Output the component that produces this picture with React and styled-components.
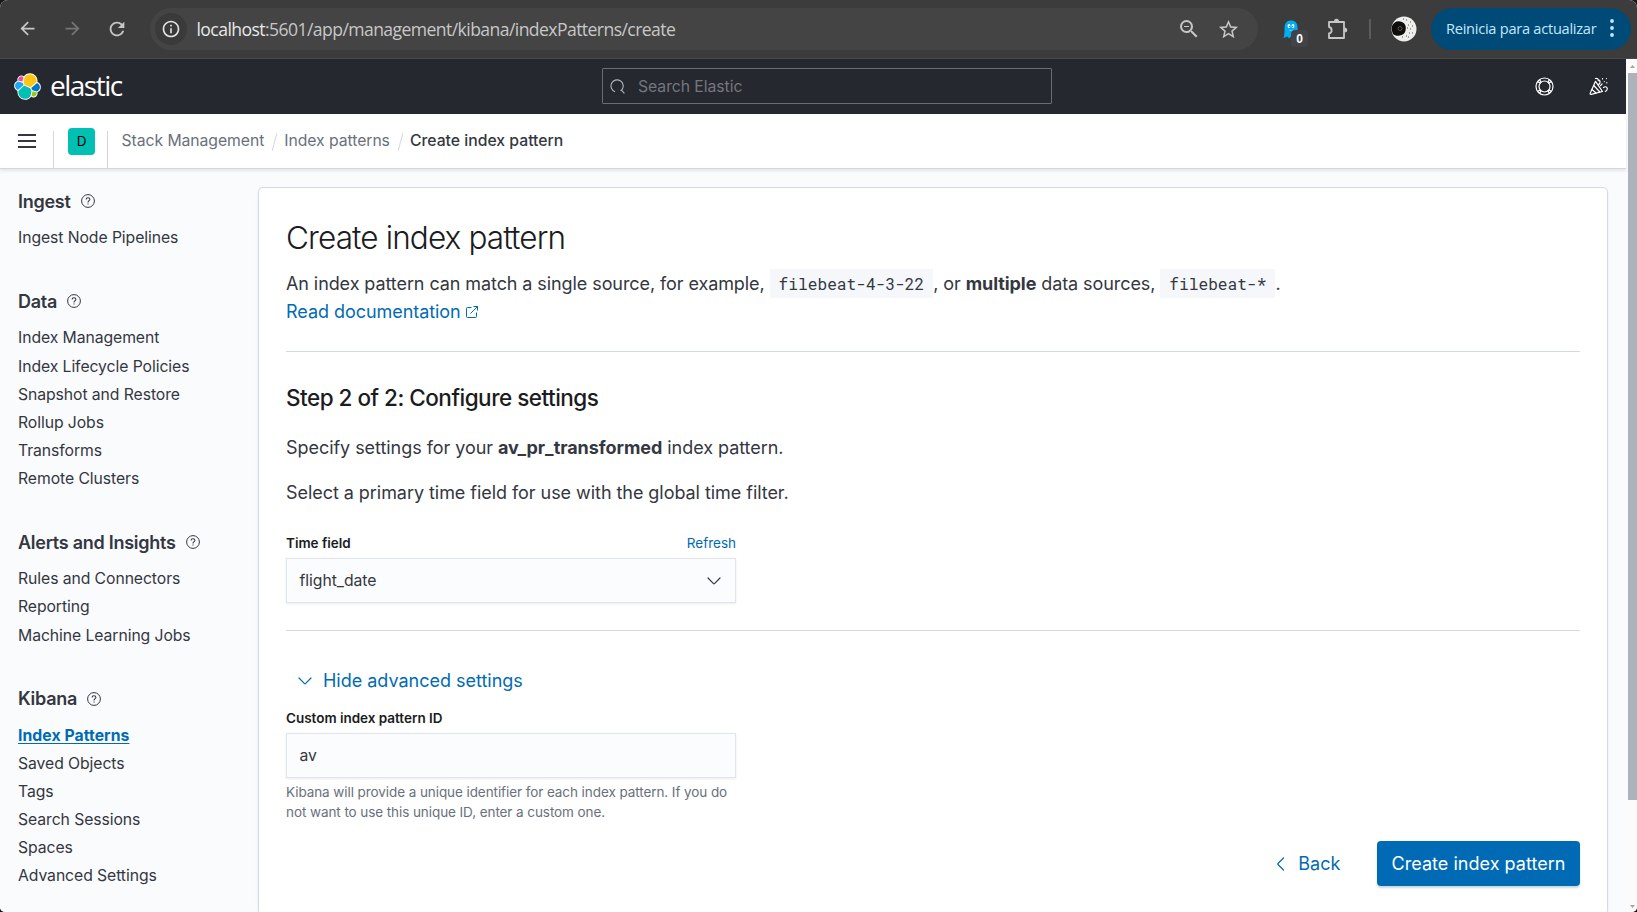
import React from "react";
import styled, { createGlobalStyle } from "styled-components";
import { MdArrowBack, MdArrowForward, MdRefresh, MdInfoOutline, MdStarBorder, MdZoomOut } from "react-icons/md";

const Global = createGlobalStyle`
  *, *::before, *::after { box-sizing: border-box; }
  html, body { margin: 0; padding: 0; background: #17181a; }
  body { font-family: Inter, "Liberation Sans", sans-serif; color: #343741; overflow: hidden; }
  h1, h2, h3, p, ul { margin: 0; padding: 0; font-weight: inherit; }
  ul { list-style: none; }
  svg { display: block; flex: none; }
`;

const Window = styled.div`
  width: 1637px; height: 912px; display: flex; flex-direction: column;
  overflow: hidden; border-radius: 8px 8px 5px 5px; background: #fafbfd;
`;

/* Browser toolbar */
const BrowserBar = styled.div`
  height: 59px; flex: none; display: flex; align-items: center;
  background: #3c3c3c; border-bottom: 1px solid #4a4a4a; padding: 0 6px 1px 15px;
  font-family: "Open Sans", "Noto Sans", sans-serif;
`;
const NavButton = styled.span`
  width: 24px; margin-right: ${p => p.$gap}px; display: flex; justify-content: center;
  color: ${p => (p.$dim ? "#757575" : "#c7c7c7")};
`;
const AddressBar = styled.div`
  width: 1108px; height: 42px; border-radius: 21px; background: #444444;
  display: flex; align-items: center; padding: 0 18px 0 5px; color: #c7c7c7;
`;
const SiteInfo = styled.span`
  width: 32px; height: 32px; border-radius: 50%; background: #3a3a3a; color: #e3e3e3;
  display: flex; align-items: center; justify-content: center; margin-right: 9px;
`;
const Url = styled.span`
  flex: 1; font-size: 17.6px; letter-spacing: -0.58px; line-height: 24px; color: #c7c7c7; white-space: nowrap;
  padding: 1px 0 0 0.5px;
  b { font-weight: 400; color: #e8e8e8; }
`;
const AddressActions = styled.span`display: flex; gap: 16px; align-items: center; padding-top: 1px;`;
const Extensions = styled.div`
  flex: 1; display: flex; align-items: center; padding-left: 24px; color: #c7c7c7;
`;
const Ghost = styled.span`position: relative; width: 26px; height: 28px; padding: 5px 0 0 1px; margin-right: 19px;`;
const GhostCount = styled.span`
  position: absolute; right: 0; bottom: -4px; width: 17px; height: 17px; border-radius: 4px;
  background: #414349; color: #fff; font: bold 12px/18px "Liberation Sans", sans-serif; text-align: center;
`;
const Divider = styled.span`width: 2px; height: 20px; background: #5c5c5c; margin: 0 20px 0 20px;`;
const UpdateButton = styled.span`
  width: 200px; height: 42px; border-radius: 21px; background: #004a77; color: #c2e7ff;
  display: flex; align-items: center; justify-content: space-between; padding: 0 17px 1px 15px;
  font-size: 14.6px; letter-spacing: -0.26px; white-space: nowrap;
`;

/* Page body beside the scrollbar */
const Viewport = styled.div`flex: 1; min-height: 0; display: flex;`;
const Page = styled.div`width: 1626px; display: flex; flex-direction: column; background: #fafbfd;`;
const Scrollbar = styled.div`
  flex: 1; display: flex; flex-direction: column; align-items: flex-end; justify-content: space-between;
  background: #fbfbfc; padding: 4px 0 2px 2px;
`;
const ScrollThumb = styled.div`width: 9px; height: 727px; background: #aeb3bb; margin-bottom: auto;`;
const ScrollArrow = styled.svg`width: 9px; height: 10px; fill: #a3a3a3;`;

const TopHeader = styled.header`
  height: 55px; flex: none; background: #25282f; display: flex; align-items: center;
  padding: 0 18px 1px 14px; color: #fff;
`;
const Brand = styled.div`
  width: 588px; display: flex; align-items: center; gap: 9px; padding-top: 1px;
  font: 400 28px/34px "Open Sans", sans-serif; letter-spacing: -1.5px;
`;
const Wordmark = styled.span`height: 37px;`;
const SearchBox = styled.div`
  width: 450px; height: 36px; border: 1px solid #696c72; border-radius: 1px; display: flex; align-items: center;
  padding: 1px 0 0 7px; gap: 13px; font-size: 15.75px; letter-spacing: -0.05px; color: #74777d;
`;
const HeaderIcons = styled.div`margin-left: auto; display: flex; gap: 35px; align-items: center;`;

const CrumbBar = styled.nav`
  height: 55px; flex: none; display: flex; background: #fff; border-bottom: 1px solid #d3d6de;
  box-shadow: 0 2px 3px rgba(65, 70, 90, 0.12); position: relative;
`;
const MenuCell = styled.div`
  width: 54px; padding: 20px 0 0 18px; 
`;
const Bar = styled.div`width: 18px; height: 2px; background: #343741; margin-bottom: 4px;`;
const Rule = styled.span`width: 1px; height: 37px; margin: 17px 0 0 -1px; background: #d3d6de;`;
const SpaceCell = styled.div`width: 54px; padding: 14px 0 0 14px;`;
const SpaceAvatar = styled.div`
  width: 27px; height: 27px; border-radius: 4px; background: #00bfb3; color: #000;
  font-size: 13.5px; line-height: 26px; text-align: center;
`;
const Crumbs = styled.div`
  height: 53px; display: flex; align-items: center; padding-left: 13.5px; font-size: 15.75px; letter-spacing: -0.06px;
`;
const Crumb = styled.span`color: ${p => (p.$current ? "#343741" : "#69707d")}; font-weight: ${p => (p.$current ? 500 : 400)}; letter-spacing: ${p => (p.$current ? "0" : "inherit")};`;
const Slash = styled.span`
  width: 1px; height: 18px; background: #d3d6de; transform: rotate(15deg); margin: 2px 9px 0 10px;
`;

const Content = styled.div`flex: 1; min-height: 0; display: flex;`;
const Sidebar = styled.aside`width: 258px; flex: none; padding: 18px 0 0 18px;`;
const SideSection = styled.section`margin-bottom: 35.2px;`;
const SideTitle = styled.h3`
  height: 28px; display: flex; align-items: center; gap: 10px; margin-bottom: 9.1px;
  font-size: 18px; font-weight: 600; letter-spacing: -0.27px;
`;
const SideLink = styled.li`
  height: 28.1px; line-height: 28.1px; font-size: 15.75px;
  color: ${p => (p.$active ? "#006bb4" : "#343741")};
  font-weight: ${p => (p.$active ? 700 : 400)};
  letter-spacing: ${p => (p.$active ? "0.06px" : "-0.08px")};
  text-decoration: ${p => (p.$active ? "underline" : "none")};
  text-underline-offset: 2px;
`;

const Panel = styled.main`
  width: 1350px; height: 728px; flex: none; margin-top: 18px; background: #fff; border: 1px solid #d3dae6;
  border-radius: 5px; box-shadow: 0 2px 3px rgba(100, 110, 140, 0.1); padding: 31px 27px 0;
  font-size: 18px; line-height: 28px; letter-spacing: -0.05px;
`;
const PageTitle = styled.h1`
  font-size: 31.5px; line-height: 38px; font-weight: 300; letter-spacing: -0.88px; color: #1a1c21; margin-bottom: 13px;
`;
const Code = styled.code`
  font-family: "Roboto Mono", "Liberation Mono", monospace; font-size: 16.2px; letter-spacing: 0;
  background: #f5f7fa; padding: 4px 9px; line-height: 20px;
`;
const Link = styled.a`color: #006bb4; display: flex; align-items: center; gap: 5px;`;
const Separator = styled.hr`height: 1px; border: 0; background: #d3dae6; margin: ${p => p.$m};`;
const StepTitle = styled.h2`
  font-size: 22.5px; line-height: 27px; font-weight: 500; letter-spacing: -0.5px; color: #1a1c21; margin-bottom: 23px;
`;
const Intro = styled.p`letter-spacing: -0.085px;`;
const Paragraph = styled.p`margin-bottom: ${p => p.$gap || 0}px;`;
const Field = styled.div`width: 450px;`;
const FieldHead = styled.div`
  display: flex; justify-content: space-between; height: 20px; line-height: 20px; margin-bottom: 5px; font-size: 13.5px;
`;
const Label = styled.span`font-weight: 600; color: #1a1c21; letter-spacing: -0.02px;`;
const SmallLink = styled.a`color: #006bb4; letter-spacing: 0;`;
const Control = styled.div`
  height: 45px; border: 1px solid #e0e4ec; background: #fbfcfd; box-shadow: 0 1px 2px rgba(100, 110, 140, 0.12);
  display: flex; align-items: center; justify-content: space-between; padding: 1px 14px 0 12.5px; font-size: 15.75px;
`;
const Toggle = styled.div`
  display: flex; align-items: center; gap: 11px; padding-left: 12px; color: #006bb4; height: 28px; margin-bottom: 13px;
  letter-spacing: -0.01px;
`;
const HelpText = styled.p`font-size: 13.5px; line-height: 20.25px; letter-spacing: -0.08px; color: #69707d; padding-top: 4px;`;
const Actions = styled.div`display: flex; justify-content: flex-end; align-items: center; margin-top: 18.5px;`;
const BackButton = styled.span`display: flex; align-items: center; gap: 13.5px; color: #006bb4; margin-right: 36.5px; padding-top: 1px; letter-spacing: 0.05px;`;
const PrimaryButton = styled.span`
  width: 203px; height: 45px; border-radius: 4px; background: #006bb4; color: #fff; text-align: center;
  line-height: 46px; box-shadow: 0 2px 2px rgba(54, 97, 126, 0.25); letter-spacing: 0.03px;
`;

const HelpIcon = () => (
  <svg width="14" height="14" viewBox="0 0 14 14" fill="none" stroke="#343741" strokeWidth="1">
    <circle cx="7" cy="7" r="6.4" />
    <path d="M5.1 5.6c0-1.2.8-1.9 1.9-1.9s1.9.7 1.9 1.7C8.900 6.700 7 6.700 7 8.400M7 9.400v1.200" strokeWidth="1.1" />
  </svg>
);
const Chevron = ({ color }) => (
  <svg width="14" height="8" viewBox="0 0 14 8" fill="none" stroke={color} strokeWidth="1.2" strokeLinecap="round" strokeLinejoin="round">
    <path d="M1 1l5.500 5.600q.5.500 1 0L13 1" />
  </svg>
);
const ElasticLogo = () => {
  const parts = [
    ["#fec514", "M12.58 13.787l7.002 3.211 7.066-6.213a7.849 7.849 0 00.152-1.557c0-4.287-3.464-7.787-7.8-7.787-2.573 0-4.983 1.287-6.433 3.424l-1.177 6.116 1.19 2.806z"],
    ["#00bfb3", "M5.333 21.214A7.969 7.969 0 005.18 22.793c0 4.323 3.492 7.838 7.838 7.838 2.616 0 5.06-1.305 6.523-3.49l1.165-6.098-1.555-2.984-7.03-3.214-6.788 6.369z"],
    ["#f04e98", "M5.288 9.067l4.8 1.137L11.14 4.73A3.785 3.785 0 008.864 3.964c-2.092 0-3.799 1.714-3.799 3.82 0 .433.077.879.223 1.283z"],
    ["#1ba9f5", "M4.872 10.214c-2.136.713-3.633 2.772-3.633 5.037 0 2.206 1.36 4.174 3.401 4.953l6.734-6.103-1.237-2.649-5.265-1.238z"],
    ["#93c90e", "M20.873 27.108a3.745 3.745 0 002.259.768c2.08 0 3.78-1.713 3.78-3.801 0-.458-.077-.9-.223-1.29l-4.753-1.11-1.063 5.433z"],
    ["#0077cc", "M21.848 20.563l5.227 1.221c2.132-.705 3.623-2.765 3.623-5.037 0-2.202-1.362-4.169-3.398-4.945l-6.844 6.003 1.392 2.758z"],
  ];
  return (
    <svg width="27" height="27" viewBox="0 0 32 32">
      {parts.map(([c, d]) => <path key={c} d={d} fill="#fff" stroke="#fff" strokeWidth="2.2" strokeLinejoin="round" />)}
      {parts.map(([c, d]) => <path key={d} d={d} fill={c} />)}
    </svg>
  );
};

const sections = [
  ["Ingest", ["Ingest Node Pipelines"]],
  ["Data", ["Index Management", "Index Lifecycle Policies", "Snapshot and Restore", "Rollup Jobs", "Transforms", "Remote Clusters"]],
  ["Alerts and Insights", ["Rules and Connectors", "Reporting", "Machine Learning Jobs"]],
  ["Kibana", ["Index Patterns", "Saved Objects", "Tags", "Search Sessions", "Spaces", "Advanced Settings"]],
];

const Toolbar = () => (
  <BrowserBar>
    <NavButton $gap={21}><MdArrowBack size={21} /></NavButton>
    <NavButton $gap={21} $dim><MdArrowForward size={21} /></NavButton>
    <NavButton $gap={21}><MdRefresh size={22} /></NavButton>
    <AddressBar>
      <SiteInfo><MdInfoOutline size={20} /></SiteInfo>
      <Url><b>localhost</b>:5601/app/management/kibana/indexPatterns/create</Url>
      <AddressActions><MdZoomOut size={24} /><MdStarBorder size={23} /></AddressActions>
    </AddressBar>
    <Extensions>
      <Ghost>
        <svg width="15" height="19" viewBox="0 0 15 19">
          <path d="M1.500 8.500C1.500 3.500 3.500.5 8 .5c4 0 6.500 2.500 6.500 7V15H11l-.5 3-2.500-1.500L6 18.500l-1.500-2-4 1.500C1.500 15 1.500 12 1.500 8.500z" fill="#00aef0" />
          <ellipse cx="6" cy="6" rx="1.400" ry="2.100" fill="#fff" />
          <ellipse cx="10" cy="6" rx="1.400" ry="2.100" fill="#fff" />
          <circle cx="6.300" cy="6.500" r=".6" fill="#00659c" /><circle cx="9.700" cy="6.500" r=".6" fill="#00659c" />
          <path d="M6.300 10q2 1.500 4 0" fill="none" stroke="#9adcf7" strokeWidth=".8" />
        </svg>
        <GhostCount>0</GhostCount>
      </Ghost>
      <svg width="22" height="22" viewBox="0 0 22 22" fill="none" stroke="currentColor" strokeWidth="1.800" strokeLinejoin="round">
        <path d="M2 4h15v16H2v-4.500c3.500-.5 3.500-6 0-6.500z" />
        <path d="M7 3.500a2.500 2.700 0 015 0zM17.500 9.500a2.700 2.500 0 010 5z" fill="currentColor" stroke="none" />
      </svg>
      <Divider />
      <svg width="26" height="26" viewBox="0 0 26 26">
        <circle cx="13" cy="13" r="12.500" fill="#eeeeed" />
        <path d="M1 10C3 5.500 7 4 11 6c4 1.500 5 7 2.500 11-3 3.500-9 3.500-11.500 1C.7 15 .5 12.500 1 10z" fill="#0e0d0b" />
        <circle cx="9" cy="12.500" r="2" fill="none" stroke="#6b6659" strokeWidth=".8" />
        <path d="M15 4h1M19 6h1M17 9h1M21 10h1M19 13h1M18 17h1M21 17h1M15 20h1M11 21h1M17 21h1M12 3h1M16 12h1" stroke="#55534e" />
      </svg>
    </Extensions>
    <UpdateButton>
      Reinicia para actualizar
      <svg width="4" height="18" viewBox="0 0 4 18" fill="currentColor"><circle cx="2" cy="2" r="1.900" /><circle cx="2" cy="9" r="1.900" /><circle cx="2" cy="16" r="1.900" /></svg>
    </UpdateButton>
  </BrowserBar>
);

const Header = () => (
  <TopHeader>
    <Brand><ElasticLogo /><Wordmark>elastic</Wordmark></Brand>
    <SearchBox>
      <svg width="15" height="15" viewBox="0 0 15 15" fill="none" stroke="#b4b6ba" strokeWidth="1.100">
        <path d="M5 12.700A6.100 6.100 0 1112 10.600L10.500 11.500M11 10.600L14.400 14.400" />
      </svg>
      Search Elastic
    </SearchBox>
    <HeaderIcons>
      <svg width="19" height="19" viewBox="0 0 19 19" fill="none" stroke="#fff" strokeWidth="1.200">
        <circle cx="9.500" cy="9.500" r="8.500" /><circle cx="9.500" cy="9.500" r="5.500" />
        <path d="M2.600 4.600L5.600 6.200M4.600 2.600L6.200 5.600M14.400 2.600L12.800 5.600M16.400 4.600L13.400 6.200M2.600 14.400L5.600 12.800M4.600 16.400L6.200 13.400M14.400 16.400L12.800 13.400M16.400 14.400L13.400 12.800" />
      </svg>
      <svg width="19" height="19" viewBox="0 0 19 19" fill="none" stroke="#fff" strokeWidth="1.200" strokeLinejoin="round" strokeLinecap="round">
        <path d="M6.500 4.300L1.200 16.300q-.3 1.300 1 1L13.500 14.500z" />
        <path d="M4.800 8.500l6 6.500M3 12.500l4 3.500M6.500 1.500C8 1 9.500 2 9.300 3.600M9 7.500C11 7.500 11.500 5 10.500 3.200M11.500 8.700l1.600-1.800M14.500 10.500c2-1.500 4-.5 3.800 1.500-.3 1.500-1 2.300-2 2.300" />
        <path d="M13.500 1.500v.5M17.500 1.500v.1M15.300 4.500v.1M17.800 5.500v.5" />
      </svg>
    </HeaderIcons>
  </TopHeader>
);

export default function App() {
  return (
    <Window>
      <Global />
      <Toolbar />
      <Viewport>
        <Page>
          <Header />
          <CrumbBar>
            <MenuCell><Bar /><Bar /><Bar /></MenuCell>
            <Rule />
            <SpaceCell><SpaceAvatar>D</SpaceAvatar></SpaceCell>
            <Rule />
            <Crumbs>
              <Crumb>Stack Management</Crumb><Slash />
              <Crumb>Index patterns</Crumb><Slash />
              <Crumb $current>Create index pattern</Crumb>
            </Crumbs>
          </CrumbBar>
          <Content>
            <Sidebar>
              {sections.map(([title, links]) => (
                <SideSection key={title}>
                  <SideTitle>{title}<HelpIcon /></SideTitle>
                  <ul>{links.map(l => <SideLink key={l} $active={l === "Index Patterns"}>{l}</SideLink>)}</ul>
                </SideSection>
              ))}
            </Sidebar>
            <Panel>
              <PageTitle>Create index pattern</PageTitle>
              <Intro>
                An index pattern can match a single source, for example, <Code>filebeat-4-3-22</Code>, or <strong>multiple</strong> data sources, <Code>filebeat-*</Code>.
              </Intro>
              <Link>
                Read documentation
                <svg width="12" height="12" viewBox="0 0 12 12" fill="none" stroke="currentColor" strokeWidth="1">
                  <path d="M5.500 1.500H1.500Q.5 1.500.5 2.500V10.500Q.5 11.500 1.500 11.500H9.500Q10.500 11.500 10.500 10.500V6.500M7.500.5H11.500V4.500M11.500.5L4.500 7.500" />
                </svg>
              </Link>
              <Separator $m="25px 0 32px" />
              <StepTitle>Step 2 of 2: Configure settings</StepTitle>
              <Paragraph $gap={17}>Specify settings for your <strong>av_pr_transformed</strong> index pattern.</Paragraph>
              <Paragraph $gap={26}>Select a primary time field for use with the global time filter.</Paragraph>
              <Field>
                <FieldHead><Label>Time field</Label><SmallLink>Refresh</SmallLink></FieldHead>
                <Control>flight_date<Chevron color="#343741" /></Control>
              </Field>
              <Separator $m="27px 0 36px" />
              <Toggle><Chevron color="#006bb4" />Hide advanced settings</Toggle>
              <Field>
                <FieldHead><Label>Custom index pattern ID</Label></FieldHead>
                <Control>av</Control>
                <HelpText>Kibana will provide a unique identifier for each index pattern. If you do not want to use this unique ID, enter a custom one.</HelpText>
              </Field>
              <Actions>
                <BackButton>
                  <svg width="9" height="14" viewBox="0 0 9 14" fill="none" stroke="currentColor" strokeWidth="1.200" strokeLinecap="round" strokeLinejoin="round"><path d="M7.500 1L2 6.500q-.5.500 0 1L7.500 13" /></svg>
                  Back
                </BackButton>
                <PrimaryButton>Create index pattern</PrimaryButton>
              </Actions>
            </Panel>
          </Content>
        </Page>
        <Scrollbar>
          <ScrollArrow viewBox="0 0 9 10"><path d="M2 5L4.500 2L7 5z" /></ScrollArrow>
          <ScrollThumb />
          <ScrollArrow viewBox="0 0 9 10"><path d="M2 5L4.500 8L7 5z" /></ScrollArrow>
        </Scrollbar>
      </Viewport>
    </Window>
  );
}
